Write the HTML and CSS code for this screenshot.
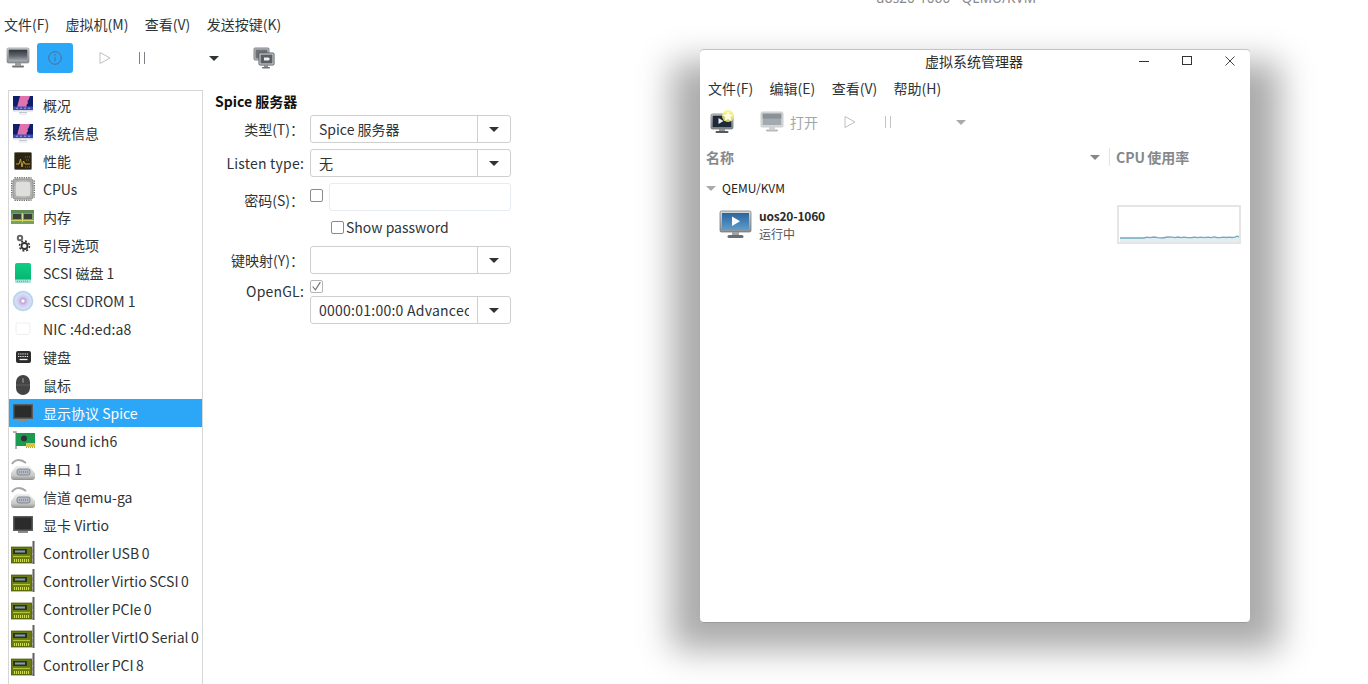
FILE: index.html
```html
<!DOCTYPE html>
<html lang="zh-CN">
<head>
<meta charset="utf-8">
<title>uos20-1060 - QEMU/KVM</title>
<link rel="stylesheet" href="styles.css">
</head>
<body>
<svg class="defs" width="0" height="0" aria-hidden="true">
  <defs>
    <linearGradient id="gSilver" x1="0" y1="0" x2="0" y2="1"><stop offset="0" stop-color="#d8dadb"/><stop offset="1" stop-color="#8d9194"/></linearGradient>
    <linearGradient id="gScreen" x1="0" y1="0" x2="0" y2="1"><stop offset="0" stop-color="#30343a"/><stop offset=".55" stop-color="#62686e"/><stop offset="1" stop-color="#a9afb3"/></linearGradient>
    <linearGradient id="gBlue" x1="0" y1="0" x2="0" y2="1"><stop offset="0" stop-color="#2b659f"/><stop offset="1" stop-color="#5f9ccb"/></linearGradient>
    <linearGradient id="gDisk" x1="0" y1="0" x2="0" y2="1"><stop offset="0" stop-color="#0fce86"/><stop offset="1" stop-color="#07b46e"/></linearGradient>
    <linearGradient id="gSerial" x1="0" y1="0" x2="0" y2="1"><stop offset="0" stop-color="#eef0ee"/><stop offset=".7" stop-color="#c6c8c4"/><stop offset="1" stop-color="#8f918d"/></linearGradient>
    <radialGradient id="gCd"><stop offset="0" stop-color="#fff"/><stop offset=".18" stop-color="#fff"/><stop offset=".2" stop-color="#b9a4d8"/><stop offset=".45" stop-color="#d9c7ee"/><stop offset=".75" stop-color="#cfe3f7"/><stop offset="1" stop-color="#aecbe8"/></radialGradient>
    <radialGradient id="gCpu"><stop offset="0" stop-color="#f1f1ef"/><stop offset="1" stop-color="#aeaeac"/></radialGradient>

    <symbol id="i-monitor" viewBox="0 0 24 22">
      <rect x="1" y="1" width="22" height="15" rx="1.5" fill="url(#gSilver)" stroke="#777b7e" stroke-width=".6"/>
      <rect x="2.6" y="2.6" width="18.8" height="11.6" fill="url(#gScreen)"/>
      <rect x="9" y="16" width="6" height="2.5" fill="#9a9da0"/>
      <rect x="6" y="18.4" width="12" height="2" rx="1" fill="#6f7376"/>
    </symbol>
    <symbol id="i-clone" viewBox="0 0 22 22">
      <rect x="1" y="1" width="15" height="12" rx="1" fill="#c8cbcd" stroke="#60666a" stroke-width=".8"/>
      <rect x="2.5" y="2.5" width="12" height="9" fill="#6b7176"/>
      <rect x="6" y="6" width="15" height="12" rx="1" fill="#dde0e1" stroke="#555b60"/>
      <rect x="7.5" y="7.5" width="12" height="9" fill="#5a6066"/>
      <path d="M11 10.500h4.500l1.500 1.500-1.500 1.500H11z" fill="#eef0f0"/>
      <rect x="11" y="18" width="4" height="2" fill="#8b9094"/>
      <rect x="9" y="20" width="8" height="1.500" rx=".7" fill="#6f7376"/>
    </symbol>
    <symbol id="i-new" viewBox="0 0 25 24">
      <rect x="1" y="4" width="22" height="15" rx="1.5" fill="url(#gSilver)" stroke="#5f6365" stroke-width=".7"/>
      <rect x="2.6" y="5.6" width="18.8" height="11.6" fill="#1f2a38"/>
      <path d="M8.500 8v6l5-3z" fill="#e8edf2"/>
      <rect x="9" y="19" width="6" height="2.200" fill="#8f9396"/>
      <rect x="5.500" y="21" width="13" height="2" rx="1" fill="#55595c"/>
      <circle cx="18" cy="6" r="6" fill="#f4f07a" opacity=".85"/>
      <path d="M18 .9l1.600 3.300 3.600.5-2.600 2.500.6 3.600-3.200-1.700-3.200 1.700.6-3.600-2.600-2.500 3.600-.5z" fill="#fffde0"/>
    </symbol>
    <symbol id="i-open" viewBox="0 0 24 22">
      <rect x="1" y="1" width="22" height="15" rx="1.5" fill="#dfe1e2" stroke="#b4b7b9" stroke-width=".7"/>
      <rect x="2.6" y="2.6" width="18.8" height="11.6" fill="#a4abb0"/>
      <path d="M2.600 2.600h18.800v5H2.600z" fill="#8b9297"/>
      <rect x="9" y="16" width="6" height="2.500" fill="#cfd1d2"/>
      <rect x="6" y="18.400" width="12" height="2" rx="1" fill="#b7babc"/>
    </symbol>
    <symbol id="i-vm" viewBox="0 0 33 29">
      <rect x="1" y="1" width="31" height="21" rx="1.5" fill="url(#gSilver)" stroke="#6a6e71" stroke-width=".7"/>
      <rect x="3" y="3" width="27" height="17" fill="url(#gBlue)"/>
      <path d="M13 6.500v9.500l8-4.800z" fill="#fff"/>
      <rect x="13" y="22" width="7" height="3" fill="#a0a3a6"/>
      <rect x="8.500" y="25" width="16" height="3" rx="1.500" fill="#6a6e71"/>
    </symbol>

    <symbol id="i-overview" viewBox="0 0 24 24">
      <rect x="2" y="3" width="20" height="14" fill="#0f1d6b"/>
      <path d="M9 3h10l-1.500 4-1 1 .5 2-1.500 2 .5 2.500H6z" fill="#e272ad"/>
      <rect x="2" y="13.500" width="20" height="3.500" fill="#3650b8"/>
      <g fill="#c9a7e8"><circle cx="6" cy="15.200" r=".8"/><circle cx="10" cy="15.200" r=".8"/><circle cx="14" cy="15.200" r=".8"/><circle cx="18" cy="15.200" r=".8"/></g>
      <rect x="2" y="17" width="20" height="1.500" fill="#d8dadf"/>
      <rect x="8" y="19" width="8" height="1" fill="#c3c5c9"/>
      <rect x="8" y="20.500" width="8" height="1" fill="#e0e1e4"/>
    </symbol>
    <symbol id="i-perf" viewBox="0 0 24 24">
      <rect x="3.500" y="3.500" width="17" height="17" rx="1" fill="#2c2412" stroke="#77725f"/>
      <path d="M5 15h3l1.500-5 1.500 8 1.500-6 1.500 3h5" fill="none" stroke="#c9a42b" stroke-width="1"/>
      <path d="M14 8h5M14 18h5M15 11h4" stroke="#8a7423" stroke-width="1" stroke-dasharray="1 1"/>
    </symbol>
    <symbol id="i-cpu" viewBox="0 0 24 24">
      <path d="M.5 3.500v17M23.500 3.500v17M3.500.5h17M3.500 23.500h17" stroke="#70706e" stroke-width="2" stroke-dasharray="1.300 1"/>
      <rect x="2" y="2" width="20" height="20" rx="2" fill="url(#gCpu)" stroke="#8f8f8c"/>
      <rect x="5" y="5" width="14" height="14" rx="1" fill="#dededc"/>
    </symbol>
    <symbol id="i-ram" viewBox="0 0 24 24">
      <rect x="0" y="5" width="23" height="14" rx="1" fill="#76a066"/>
      <rect x="0" y="5" width="23" height="3" fill="#5f8a56"/>
      <g fill="#3b3f39"><rect x="2" y="9" width="8" height="5"/><rect x="13" y="9" width="8" height="5"/></g>
      <path d="M11.500 8v9" stroke="#c9e08f"/>
      <path d="M0 15.500h23" stroke="#d4d85a"/>
      <path d="M0 18h23" stroke="#8f8f7a" stroke-width="2" stroke-dasharray="1 1"/>
    </symbol>
    <symbol id="i-boot" viewBox="0 0 24 24">
      <circle cx="9" cy="5" r="2.200" fill="none" stroke="#666" stroke-width="2"/>
      <g fill="none" stroke="#333"><circle cx="13.500" cy="13" r="3" stroke-width="1.800"/><circle cx="13.500" cy="13" r="5" stroke-width="1.500" stroke-dasharray="2 1.900"/></g>
    </symbol>
    <symbol id="i-disk" viewBox="0 0 24 24">
      <path d="M4 4a2 2 0 0 1 2-2h12a2 2 0 0 1 2 2v16H4z" fill="url(#gDisk)"/>
      <path d="M4 18.500h16V21a1 1 0 0 1-1 1H5a1 1 0 0 1-1-1z" fill="#a8e0dc"/>
      <path d="M6 20.300h12" stroke="#4fa7a7" stroke-width="1" stroke-dasharray="1 1"/>
    </symbol>
    <symbol id="i-cd" viewBox="0 0 24 24">
      <circle cx="12" cy="12" r="10" fill="url(#gCd)" stroke="#b7cde3" stroke-width=".5"/>
      <circle cx="12" cy="12" r="2" fill="#fff" stroke="#a895c7" stroke-width=".6"/>
    </symbol>
    <symbol id="i-nic" viewBox="0 0 24 24">
      <path d="M5.500 6h13a.5.5 0 0 1 .5.5V16l-1.500 1.500h-11L5 16V6.500a.5.5 0 0 1 .5-.5z" fill="#fff" stroke="#eee" stroke-width="1"/>
    </symbol>
    <symbol id="i-kbd" viewBox="0 0 24 24">
      <rect x="5" y="6" width="15" height="12" rx="2" fill="#2c2c2c"/>
      <path d="M7 9h11M7 11.500h11" stroke="#eee" stroke-width="1.200" stroke-dasharray="1.300 .9"/>
      <path d="M8.500 14.500h8" stroke="#eee" stroke-width="1.300"/>
    </symbol>
    <symbol id="i-mouse" viewBox="0 0 24 24">
      <rect x="5" y="2" width="14" height="20" rx="7" fill="#444"/>
      <path d="M5 12h14" stroke="#777" stroke-width=".6"/>
      <rect x="11" y="5" width="2" height="5" rx="1" fill="#777"/>
    </symbol>
    <symbol id="i-display" viewBox="0 0 24 24">
      <rect x="2" y="3" width="20" height="15" rx=".5" fill="#5a5c5c"/>
      <rect x="3.500" y="4.500" width="17" height="12" fill="#2b2b2b"/>
      <rect x="7" y="18" width="10" height="2" fill="#8a8c8c"/>
    </symbol>
    <symbol id="i-sound" viewBox="0 0 24 24">
      <path d="M2 3h3v17" fill="none" stroke="#9c9c9c" stroke-width="1.500"/>
      <rect x="5" y="4" width="19" height="13" fill="#1c9a52"/>
      <circle cx="13" cy="9.500" r="3" fill="#333"/>
      <path d="M15 14h9v4h-9z" fill="#d9c343"/>
      <path d="M15 18.500h9" stroke="#b9a22e" stroke-dasharray="1 1"/>
    </symbol>
    <symbol id="i-serial" viewBox="0 0 24 24">
      <path d="M1 7C4 2 10 2 15 6" fill="none" stroke="#a3a5a2" stroke-width="2"/>
      <path d="M0 16l5-7h13l6 7v4c0 2-1 3-3 3H3c-2 0-3-1-3-3z" fill="url(#gSerial)"/>
      <rect x="6" y="12" width="13" height="6" rx="2" fill="#b4b9c4" stroke="#757a84" stroke-width=".8"/>
      <path d="M8 15h9" stroke="#666b75" stroke-dasharray="1 1"/>
    </symbol>
    <symbol id="i-ctrl" viewBox="0 0 24 24">
      <rect x="0" y="6" width="21" height="16" fill="#6a7a10" stroke="#46500f" stroke-width=".7"/>
      <rect x="2" y="8" width="14" height="5" fill="#28322a"/>
      <rect x="4" y="9.500" width="10" height="2" fill="#7fa0a8"/>
      <path d="M2 15.500h17" stroke="#b3c53a" stroke-width="1.200"/>
      <path d="M3 19.500h16" stroke="#cfdb4c" stroke-width="3" stroke-dasharray="1 1"/>
      <path d="M22.500 0v23" stroke="#5f615b" stroke-width="2"/>
      <path d="M21 7h1M21 13h1M21 19h1" stroke="#a9aaa4" stroke-width="2"/>
    </symbol>
  </defs>
</svg>

<div class="vm-page">
  <nav class="menubar">
    <span class="menu-item">文件(F)</span>
    <span class="menu-item">虚拟机(M)</span>
    <span class="menu-item">查看(V)</span>
    <span class="menu-item">发送按键(K)</span>
  </nav>
  <div class="toolbar">
    <span class="tool tool-console"><svg width="24" height="22"><use href="#i-monitor"/></svg></span>
    <span class="tool tool-info">
      <svg width="14" height="14" viewBox="0 0 14 14"><circle cx="7" cy="7" r="6.300" fill="none" stroke="#4c708e" stroke-width="1"/><path d="M7 6v4.500" stroke="#4c708e"/><circle cx="7" cy="4" r=".7" fill="#4c708e"/></svg>
    </span>
    <span class="tool tool-play"><svg width="12" height="14" viewBox="0 0 12 14"><path d="M1 1.500v11l10-5.500z" fill="none" stroke="#bcc0c4"/></svg></span>
    <span class="tool tool-pause"><svg width="8" height="14" viewBox="0 0 8 14"><path d="M1.500 1v12M6.500 1v12" stroke="#7d8185"/></svg></span>
    <span class="tool tool-arrow"><i class="tri tri-dark"></i></span>
    <span class="tool tool-clone"><svg width="22" height="22"><use href="#i-clone"/></svg></span>
  </div>

  <main class="details">
    <ul class="hw-list">
      <li class="hw-row"><svg class="hw-icon"><use href="#i-overview"/></svg>概况</li>
      <li class="hw-row"><svg class="hw-icon"><use href="#i-overview"/></svg>系统信息</li>
      <li class="hw-row"><svg class="hw-icon"><use href="#i-perf"/></svg>性能</li>
      <li class="hw-row"><svg class="hw-icon"><use href="#i-cpu"/></svg>CPUs</li>
      <li class="hw-row"><svg class="hw-icon"><use href="#i-ram"/></svg>内存</li>
      <li class="hw-row"><svg class="hw-icon"><use href="#i-boot"/></svg>引导选项</li>
      <li class="hw-row"><svg class="hw-icon"><use href="#i-disk"/></svg>SCSI 磁盘 1</li>
      <li class="hw-row"><svg class="hw-icon"><use href="#i-cd"/></svg>SCSI CDROM 1</li>
      <li class="hw-row hw-wide"><svg class="hw-icon"><use href="#i-nic"/></svg>NIC :4d:ed:a8</li>
      <li class="hw-row"><svg class="hw-icon"><use href="#i-kbd"/></svg>键盘</li>
      <li class="hw-row"><svg class="hw-icon"><use href="#i-mouse"/></svg>鼠标</li>
      <li class="hw-row hw-selected"><svg class="hw-icon"><use href="#i-display"/></svg>显示协议 Spice</li>
      <li class="hw-row hw-wide"><svg class="hw-icon"><use href="#i-sound"/></svg>Sound ich6</li>
      <li class="hw-row"><svg class="hw-icon"><use href="#i-serial"/></svg>串口 1</li>
      <li class="hw-row"><svg class="hw-icon"><use href="#i-serial"/></svg>信道 qemu-ga</li>
      <li class="hw-row"><svg class="hw-icon"><use href="#i-display"/></svg>显卡 Virtio</li>
      <li class="hw-row hw-ctrl"><svg class="hw-icon"><use href="#i-ctrl"/></svg>Controller USB 0</li>
      <li class="hw-row hw-ctrl"><svg class="hw-icon"><use href="#i-ctrl"/></svg>Controller Virtio SCSI 0</li>
      <li class="hw-row hw-ctrl"><svg class="hw-icon"><use href="#i-ctrl"/></svg>Controller PCIe 0</li>
      <li class="hw-row hw-ctrl"><svg class="hw-icon"><use href="#i-ctrl"/></svg>Controller VirtIO Serial 0</li>
      <li class="hw-row hw-ctrl"><svg class="hw-icon"><use href="#i-ctrl"/></svg>Controller PCI 8</li>
    </ul>

    <section class="panel">
      <h2 class="panel-title">Spice 服务器</h2>
      <div class="form">
        <span class="label">类型(T)：</span>
        <div class="combo"><span class="combo-text">Spice 服务器</span><span class="combo-btn"><i class="tri tri-dark"></i></span></div>

        <span class="label label-latin">Listen type:</span>
        <div class="combo"><span class="combo-text">无</span><span class="combo-btn"><i class="tri tri-dark"></i></span></div>

        <span class="label label-low">密码(S)：</span>
        <div class="pw-row"><span class="check"></span><span class="entry"></span></div>

        <span class="label-empty"></span>
        <div class="show-row"><span class="check"></span><span>Show password</span></div>

        <span class="label">键映射(Y)：</span>
        <div class="combo"><span class="combo-text"></span><span class="combo-btn"><i class="tri tri-dark"></i></span></div>

        <span class="label label-latin label-top">OpenGL:</span>
        <div class="gl-stack">
          <span class="check check-on"><svg width="11" height="11" viewBox="0 0 10 10"><path d="M1.500 5l2.500 3 4.500-7" fill="none" stroke="#6d6d6d" stroke-width="1"/></svg></span>
          <div class="combo"><span class="combo-text combo-long">0000:01:00:0 Advanced Micro Devices</span><span class="combo-btn"><i class="tri tri-dark"></i></span></div>
        </div>
      </div>
    </section>
  </main>
</div>

<div class="behind-title">uos20-1060 - QEMU/KVM</div>

<div class="manager">
  <header class="mgr-title">
    <span></span>
    <span class="mgr-name">虚拟系统管理器</span>
    <span class="win-controls">
      <svg width="10" height="10" viewBox="0 0 10 10"><path d="M0 5.500h10" stroke="#333"/></svg>
      <svg width="10" height="10" viewBox="0 0 10 10"><rect x=".5" y=".5" width="9" height="8" fill="none" stroke="#333"/></svg>
      <svg width="10" height="10" viewBox="0 0 10 10"><path d="M.5.500l9 9M9.500.500l-9 9" stroke="#444"/></svg>
    </span>
  </header>
  <nav class="mgr-menu">
    <span>文件(F)</span><span>编辑(E)</span><span>查看(V)</span><span>帮助(H)</span>
  </nav>
  <div class="mgr-tools">
    <svg class="mt-new" width="25" height="24"><use href="#i-new"/></svg>
    <svg class="mt-open" width="24" height="22"><use href="#i-open"/></svg>
    <span class="mt-label">打开</span>
    <svg class="mt-play" width="12" height="14" viewBox="0 0 12 14"><path d="M1 1.500v11l10-5.500z" fill="none" stroke="#bcc0c4"/></svg>
    <svg class="mt-pause" width="8" height="14" viewBox="0 0 8 14"><path d="M1.500 1v12M6.500 1v12" stroke="#c2c5c8"/></svg>
    <i class="tri tri-grey mt-arrow"></i>
  </div>
  <div class="mgr-head">
    <span class="col-name">名称</span>
    <i class="tri tri-mid"></i>
    <span class="col-sep"></span>
    <span class="col-cpu">CPU 使用率</span>
  </div>
  <div class="mgr-group"><i class="tri tri-grey"></i><span>QEMU/KVM</span></div>
  <div class="mgr-vm">
    <svg width="33" height="29"><use href="#i-vm"/></svg>
    <div class="vm-text">
      <strong>uos20-1060</strong>
      <span>运行中</span>
    </div>
    <div class="vm-graph">
      <svg width="120" height="35" viewBox="0 0 120 35">
        <path d="M1 31h24l3-.8 3 .5 4-.7 4 .7 4 .3 6-1 4 .2 3 .5 3-.7 3 .7 3-.5 4 .5 4-.2 3-.4 3 .5 3-.4 3 .4 4-.4 3 .5 3-.8 3 .6 3 .2 3-.6 3 .4 3-.3 3 .3 3-.4 2-1 3 .9V35H1z" fill="#e1eef4"/>
        <path d="M1 31h24l3-.8 3 .5 4-.7 4 .7 4 .3 6-1 4 .2 3 .5 3-.7 3 .7 3-.5 4 .5 4-.2 3-.4 3 .5 3-.4 3 .4 4-.4 3 .5 3-.8 3 .6 3 .2 3-.6 3 .4 3-.3 3 .3 3-.4 2-1 3 .9" fill="none" stroke="#74a9bf" stroke-width="1.300"/>
      </svg>
    </div>
  </div>
</div>
</body>
</html>
```
FILE: styles.css
```css
* { box-sizing: border-box; }
html { background: #fff; }
html, body { margin: 0; height: 684px; overflow: hidden; }
body {
  font-family: "Noto Sans CJK SC", "Noto Sans", sans-serif;
  font-size: 14px;
  line-height: 22px;
  color: #2e3436;
}
.defs { position: absolute; }
svg { display: block; flex: none; }

.tri { display: block; width: 0; height: 0; border-style: solid; border-width: 5px 5px 0; border-color: transparent; }
.tri-dark { border-top-color: #2e3436; }
.tri-grey { border-top-color: #a8abad; }
.tri-mid { border-top-color: #85888b; }

/* left window */
.vm-page { height: 684px; display: flex; flex-direction: column; }
.menubar { display: flex; gap: 16.4px; padding: 13px 4px 8px; }
.toolbar { display: flex; align-items: center; height: 30px; padding-left: 6px; }
.tool { display: flex; align-items: center; justify-content: center; }
.tool-console { width: 24px; margin-right: 7px; }
.tool-info { width: 36px; height: 30px; background: #2ca7f8; border-radius: 3px; margin-right: 26px; }
.tool-play { width: 12px; margin-right: 27px; }
.tool-pause { width: 8px; margin-right: 63px; }
.tool-arrow { width: 10px; margin-right: 34px; }
.tool-clone { width: 22px; }

.details { flex: 1; display: flex; margin-top: 17px; min-height: 0; }
.hw-list {
  list-style: none;
  margin: 0 0 0 8px;
  padding: 0;
  width: 195px;
  border: 1px solid #d6d6d6;
  border-bottom: 0;
}
.hw-row { display: flex; align-items: center; height: 28px; padding-left: 2px; white-space: nowrap; }
.hw-icon { width: 24px; height: 24px; margin-right: 8px; }
.hw-selected { background: #2ca7f8; color: #fff; }
.hw-ctrl { word-spacing: -.6px; }
.hw-wide { letter-spacing: .15px; }

.panel { padding-left: 12px; width: 308px; }
.panel-title { margin: 0 0 3px; font-size: 14px; line-height: 22px; font-weight: 700; color: #111; }
.form { display: grid; grid-template-columns: 89px 201px; column-gap: 6px; row-gap: 6px; align-items: center; }
.label { text-align: right; white-space: nowrap; justify-self: end; line-height: 22px; }
.label-low { padding-top: 6px; }
.label-latin { letter-spacing: .2px; }
.label-top { align-self: start; }

.combo { display: flex; height: 28px; border: 1px solid #cfcfcf; border-radius: 3px; background: #fff; min-width: 0; }
.combo-text { flex: 1; min-width: 0; overflow: hidden; white-space: nowrap; margin: 0 8px; line-height: 26px; }
.combo-long { letter-spacing: .25px; }
.combo-btn { flex: none; width: 33px; border-left: 1px solid #cfcfcf; display: flex; align-items: center; justify-content: center; }

.check { display: block; flex: none; width: 13px; height: 13px; border: 1px solid #8b8b8b; border-radius: 2px; background: #fff; }
.check-on { border-color: #b5b5b5; }
.pw-row { display: flex; gap: 6px; height: 28px; align-items: center; padding-left: 0; }
.pw-row .check { margin-top: -3px; }
.entry { flex: 1; height: 28px; border: 1px solid #e7ebf2; border-radius: 3px; }
.show-row { display: flex; align-items: center; gap: 2px; height: 23px; padding: 0 0 3px 21px; }
.gl-stack { display: flex; flex-direction: column; }
.gl-stack .check { margin: 0 0 3px; }

/* text from a window title cut off by the top edge */
.behind-title { position: absolute; left: 876px; top: -13px; color: #8a8a8a; white-space: nowrap; font-family: "Noto Sans", sans-serif; font-size: 13.6px; }

/* virt-manager window */
.manager {
  position: absolute;
  left: 700px; top: 49px;
  width: 550px; height: 574px;
  background: #fff;
  border-radius: 4px;
  box-shadow: inset 0 1px 0 #c4c4c4, inset 0 -1px 0 #9a9a9a;
  display: flex;
  flex-direction: column;
}
.manager::before {
  content: "";
  position: absolute;
  z-index: -1;
  left: -28px; right: -30px; top: 13px; bottom: -27px;
  background: rgba(0,0,0,.335);
  filter: blur(17px);
}
.mgr-title { display: grid; grid-template-columns: 1fr auto 1fr; align-items: center; height: 24px; margin-bottom: 4px; }
.mgr-name { color: #2b2b2b; margin-right: 2px; }
.win-controls { display: flex; justify-content: flex-end; gap: 33px; padding-right: 15px; }
.mgr-menu { display: flex; gap: 16.4px; height: 22px; padding-left: 8px; }
.mgr-tools { display: flex; align-items: center; height: 30px; margin-top: 8px; padding-left: 10px; color: #a3a6a8; }
.mt-new { margin-right: 25px; }
.mt-open { margin-right: 6px; }
.mt-label { margin-right: 26px; }
.mt-play { margin-right: 28px; }
.mt-pause { margin-right: 64px; }
.mgr-head { display: flex; align-items: center; height: 20px; margin-top: 10px; padding-left: 6px; font-weight: 700; color: #85888b; }
.col-name { width: 384px; }
.col-sep { width: 1px; height: 18px; background: #e4e4e4; margin: 0 6px 0 9px; }
.col-cpu { white-space: nowrap; word-spacing: -1px; }
.mgr-group { display: flex; align-items: center; gap: 6px; height: 20px; margin-top: 11px; padding-left: 6px; font-size: 12px; color: #222; }
.mgr-vm { display: flex; align-items: center; height: 39px; margin-top: 7px; padding-left: 19px; }
.vm-text { display: flex; flex-direction: column; width: 359px; margin-left: 7px; font-size: 12px; line-height: 18px; color: #555; }
.vm-text strong { color: #2b2b2b; font-weight: 700; letter-spacing: -.2px; }
.vm-graph { width: 124px; height: 39px; margin-left: -1px; border: 2px solid #e9e4e4; background: #fff; }
```
